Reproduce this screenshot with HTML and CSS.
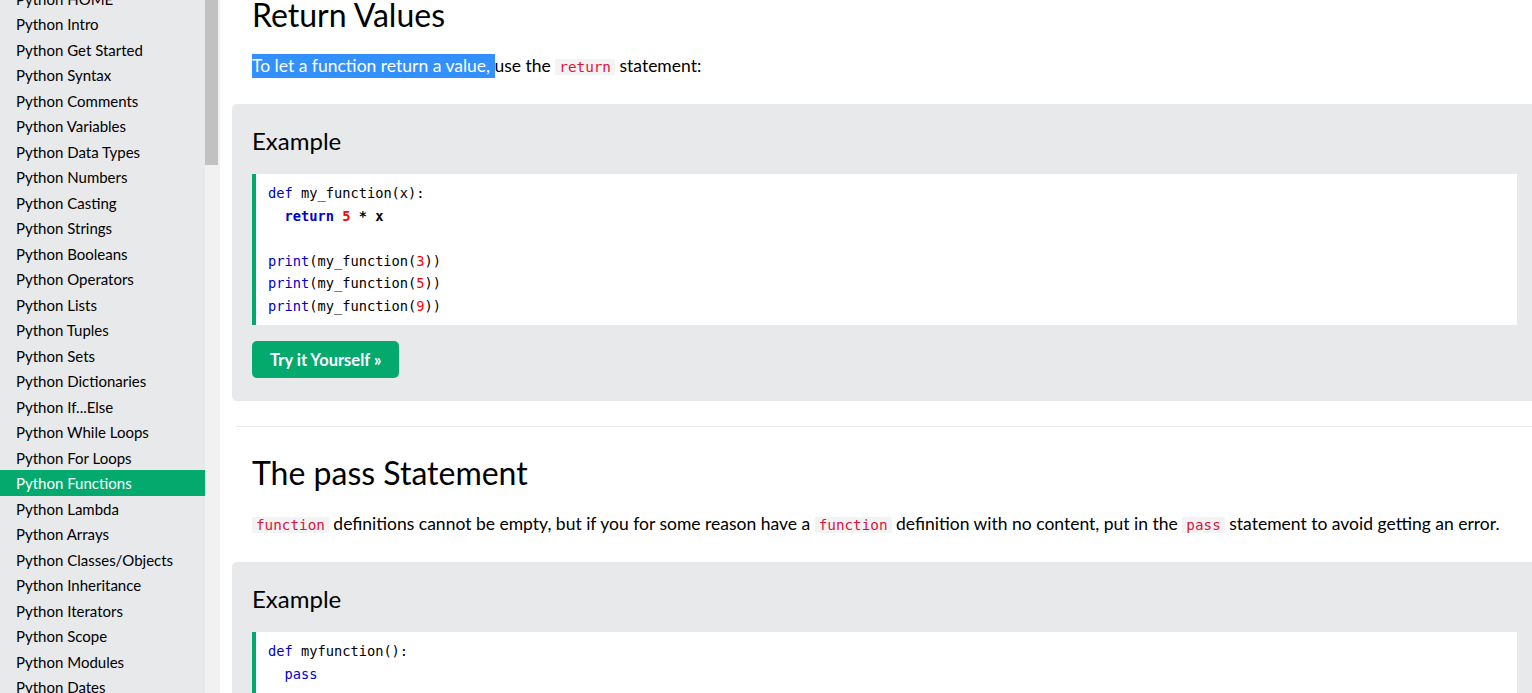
FILE: index.html
```html
<!DOCTYPE html>
<html lang="en">
<head>
<meta charset="utf-8">
<title>Python Functions</title>
<link rel="stylesheet" href="styles.css">
</head>
<body>
<div class="page">
  <aside class="sidebar">
    <nav class="nav">
      <a class="nav-item">Python HOME</a>
      <a class="nav-item">Python Intro</a>
      <a class="nav-item">Python Get Started</a>
      <a class="nav-item">Python Syntax</a>
      <a class="nav-item">Python Comments</a>
      <a class="nav-item">Python Variables</a>
      <a class="nav-item">Python Data Types</a>
      <a class="nav-item">Python Numbers</a>
      <a class="nav-item">Python Casting</a>
      <a class="nav-item">Python Strings</a>
      <a class="nav-item">Python Booleans</a>
      <a class="nav-item">Python Operators</a>
      <a class="nav-item">Python Lists</a>
      <a class="nav-item">Python Tuples</a>
      <a class="nav-item">Python Sets</a>
      <a class="nav-item">Python Dictionaries</a>
      <a class="nav-item">Python If...Else</a>
      <a class="nav-item">Python While Loops</a>
      <a class="nav-item">Python For Loops</a>
      <a class="nav-item active">Python Functions</a>
      <a class="nav-item">Python Lambda</a>
      <a class="nav-item">Python Arrays</a>
      <a class="nav-item">Python Classes/Objects</a>
      <a class="nav-item">Python Inheritance</a>
      <a class="nav-item">Python Iterators</a>
      <a class="nav-item">Python Scope</a>
      <a class="nav-item">Python Modules</a>
      <a class="nav-item">Python Dates</a>
      <a class="nav-item">Python Math</a>
    </nav>
    <div class="scrollbar"><div class="thumb"></div></div>
  </aside>

  <main class="main">
    <h2 class="heading first">Return Values</h2>
    <p class="text"><span class="selected">To let a function return a value, </span>use the <code class="codespan">return</code> statement:</p>

    <div class="example">
      <h3 class="example-title">Example</h3>
      <div class="code"><span class="kw">def</span> my_function(x):<br>
&nbsp;&nbsp;<span class="kw bold">return</span> <span class="num bold">5</span> <b>*</b> <b>x</b><br>
<br>
<span class="kw">print</span>(my_function(<span class="num">3</span>))<br>
<span class="kw">print</span>(my_function(<span class="num">5</span>))<br>
<span class="kw">print</span>(my_function(<span class="num">9</span>))</div>
      <a class="try-btn">Try it Yourself »</a>
    </div>

    <hr class="divider">

    <h2 class="heading second">The pass Statement</h2>
    <p class="text"><code class="codespan">function</code> definitions cannot be empty, but if you for some reason have a <code class="codespan">function</code> definition with no content, put in the <code class="codespan">pass</code> statement to avoid getting an error.</p>

    <div class="example">
      <h3 class="example-title">Example</h3>
      <div class="code"><span class="kw">def</span> myfunction():<br>
&nbsp;&nbsp;<span class="kw">pass</span></div>
    </div>
  </main>
</div>
</body>
</html>
```

FILE: styles.css
```css
html, body {
  margin: 0;
  padding: 0;
  height: 100%;
  overflow: hidden;
  background: #fff;
}

body {
  font-family: Lato, "Open Sans", sans-serif;
  font-size: 15px;
  color: #000;
}

.page {
  display: flex;
  height: 693px;
  width: 1532px;
  overflow: hidden;
}

.sidebar {
  flex: 0 0 220px;
  display: flex;
  height: 693px;
  overflow: hidden;
}

.nav {
  flex: 0 0 205px;
  background: #e7e9eb;
  display: flex;
  flex-direction: column;
  margin-top: -14.25px;
}

.nav-item {
  display: flex;
  align-items: center;
  height: 25.5px;
  flex: 0 0 25.5px;
  padding: 0 16px;
  color: #000;
  white-space: nowrap;
}

.nav-item.active {
  background: #04aa6d;
  color: #fff;
}

.scrollbar {
  flex: 0 0 15px;
  background: #f1f1f1;
  display: flex;
  flex-direction: column;
  padding: 0 2px 0 0;
  box-sizing: border-box;
}

.thumb {
  height: 165px;
  width: 13px;
  background: #c1c1c1;
}

.main {
  flex: 0 0 auto;
  width: 1325px;
  padding-left: 12px;
  box-sizing: border-box;
}

.heading {
  font-size: 32px;
  font-weight: 400;
  line-height: 48px;
  margin: 0;
  padding-left: 20px;
}

.heading.first {
  margin-top: -9px;
}

.heading.second {
  margin-top: 22px;
}

.text {
  margin: 15px 0 0;
  padding-left: 20px;
  font-size: 17.5px;
  line-height: 24px;
  white-space: nowrap;
}

.selected {
  background: #3390ff;
  color: #fff;
  padding: 1px 0 2px;
}

.codespan {
  font-family: "DejaVu Sans Mono", monospace;
  font-size: 14.3px;
  color: crimson;
  background: #f3f3f3;
  padding: 0 4px;
}

.example {
  background: #e7e9eb;
  border-radius: 5px;
  padding: 19px 20px 23px;
  margin-top: 25px;
  width: 1305px;
  box-sizing: border-box;
}

.example-title {
  font-size: 24px;
  font-weight: 400;
  line-height: 36px;
  margin: 0 0 15px;
}

.code {
  background: #fff;
  border-left: 4px solid #04aa6d;
  padding: 8px 12px;
  font-family: "DejaVu Sans Mono", monospace;
  font-size: 13.7px;
  line-height: 22.5px;
  color: #000;
}

.kw { color: #0000cd; }
.num { color: red; }
.bold { font-weight: 700; }

.try-btn {
  display: inline-flex;
  align-items: center;
  margin-top: 16px;
  height: 37px;
  padding: 0 18px;
  background: #04aa6d;
  color: #fff;
  font-weight: 700;
  font-size: 16.5px;
  border-radius: 5px;
}

.divider {
  border: 0;
  border-top: 1px solid #e8e8e8;
  margin: 25px 0 0 4px;
}
```
